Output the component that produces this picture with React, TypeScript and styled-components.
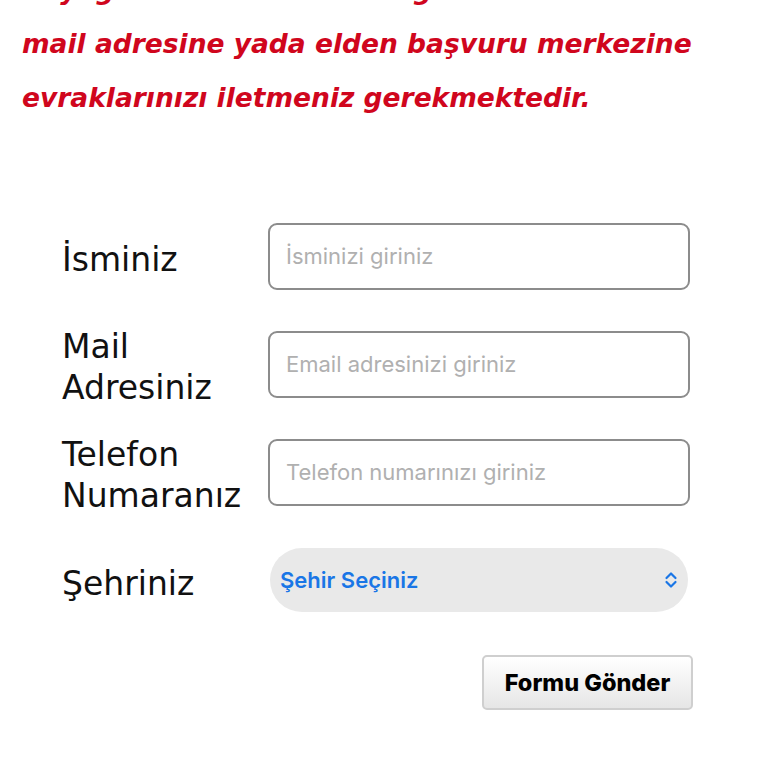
import React from 'react'
import styled, { createGlobalStyle } from 'styled-components'

const GlobalStyle = createGlobalStyle`
  html, body {
    margin: 0;
    padding: 0;
    background: #ffffff;
    overflow: hidden;
  }
  body {
    font-family: 'DejaVu Sans', sans-serif;
  }
`

const Page = styled(`div`)`
  width: 768px;
  height: 768px;
  overflow: hidden;
  display: flex;
  flex-direction: column;
`

const Notice = styled(`p`)`
  margin: -37px 0 0 0;
  padding: 0 22px;
  font-family: 'DejaVu Sans', sans-serif;
  font-style: italic;
  font-weight: 700;
  font-size: 26.5px;
  line-height: 54px;
  color: #d0061d;
  white-space: nowrap;
`

const Form = styled(`form`)`
  margin-top: 77px;
  padding-left: 62px;
  width: 628px;
  display: flex;
  flex-direction: column;
`

const Row = styled(`div`)`
  display: grid;
  grid-template-columns: 206px 1fr;
  align-items: center;
  height: 108px;
`

const Label = styled(`label`)`
  padding-top: 6px;
  font-family: 'DejaVu Sans', sans-serif;
  font-size: 33px;
  line-height: 41px;
  color: #111111;
`

const TextInput = styled(`input`)`
  box-sizing: border-box;
  width: 422px;
  height: 67px;
  border: 2px solid #8c8c8c;
  border-radius: 9px;
  padding: 0 16px;
  font-family: Inter, 'Noto Sans', sans-serif;
  font-size: 22px;
  color: #222;
  background: #fff;
  outline: none;

  &::placeholder {
    color: #b0b0b0;
  }
`

const CitySelect = styled(`div`)`
  box-sizing: border-box;
  margin-left: 2px;
  width: 418px;
  height: 64px;
  border-radius: 32px;
  background: #e9e9e9;
  display: flex;
  align-items: center;
  justify-content: space-between;
  padding: 0 10px 0 10px;
  font-family: Inter, 'Noto Sans', sans-serif;
  font-size: 22px;
  font-weight: 600;
  color: #1a76e6;
`

const Actions = styled(`div`)`
  display: flex;
  justify-content: flex-end;
  margin-top: 21px;
  margin-right: -3px;
`

const SubmitButton = styled(`button`)`
  width: 211px;
  height: 55px;
  border: 2px solid #cfcfcf;
  border-radius: 5px;
  background: linear-gradient(#ffffff, #e6e6e6);
  font-family: Inter, 'Liberation Sans', sans-serif;
  font-weight: 800;
  font-size: 23.5px;
  color: #000;
`

function Chevrons() {
  return (
    <svg width="14" height="18" viewBox="0 0 14 18" fill="none">
      <path
        d="M2.5 7 L7 2.5 L11.5 7 M2.5 11 L7 15.5 L11.5 11"
        stroke="#1a76e6"
        strokeWidth="2.2"
        strokeLinecap="round"
        strokeLinejoin="round"
      />
    </svg>
  )
}

const fields = [
  { id: 'isim', label: ['İsminiz'], placeholder: 'İsminizi giriniz' },
  { id: 'mail', label: ['Mail', 'Adresiniz'], placeholder: 'Email adresinizi giriniz' },
  { id: 'tel', label: ['Telefon', 'Numaranız'], placeholder: 'Telefon numarınızı giriniz' },
]

export default function App() {
  return (
    <Page>
      <GlobalStyle />
      <Notice>
        Beyoğlu merkez ofisimiz ilgili birim e-
        <br />
        mail adresine yada elden başvuru merkezine
        <br />
        evraklarınızı iletmeniz gerekmektedir.
      </Notice>
      <Form onSubmit={e => e.preventDefault()}>
        {fields.map(f => (
          <Row key={f.id}>
            <Label htmlFor={f.id}>
              {f.label.map((l, i) => (
                <React.Fragment key={l}>
                  {i > 0 && <br />}
                  {l}
                </React.Fragment>
              ))}
            </Label>
            <TextInput id={f.id} placeholder={f.placeholder} />
          </Row>
        ))}
        <Row>
          <Label>Şehriniz</Label>
          <CitySelect>
            <span>Şehir Seçiniz</span>
            <Chevrons />
          </CitySelect>
        </Row>
        <Actions>
          <SubmitButton type="submit">Formu Gönder</SubmitButton>
        </Actions>
      </Form>
    </Page>
  )
}
